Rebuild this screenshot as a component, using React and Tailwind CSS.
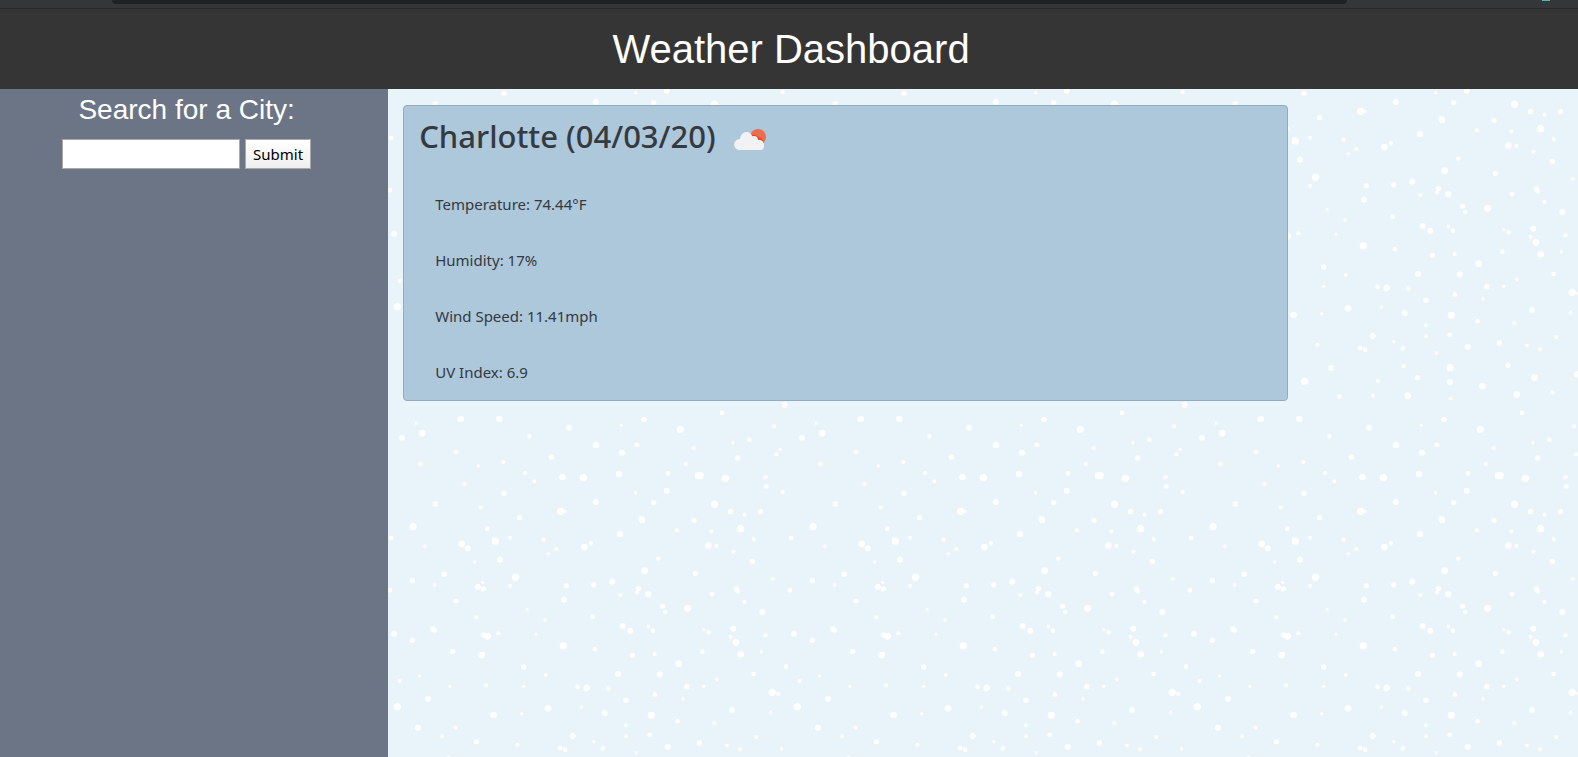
import React from "react";

// Snowflakes of one background tile: [cx, cy, r] in a 1200 x 1200 space.
const FLAKES = [
  [1190, 14, 9], [1002, 39, 7], [218, 57, 10], [334, 57, 10], [768, 58, 8], [85, 70, 5], [700, 76, 5], [543, 83, 9],
  [877, 88, 11], [1158, 79, 6], [103, 100, 10], [42, 113, 9], [424, 109, 7], [1084, 119, 7], [1035, 128, 5],
  [624, 135, 10], [747, 135, 7], [917, 144, 6], [1177, 148, 5], [204, 156, 6], [702, 158, 9], [1165, 163, 6],
  [490, 171, 8], [1049, 174, 8], [346, 186, 6], [98, 192, 7], [271, 198, 5], [893, 192, 6], [411, 219, 6],
  [693, 222, 10], [840, 220, 7], [930, 227, 10], [937, 227, 10], [523, 231, 10], [586, 233, 11], [1012, 235, 11],
  [1132, 232, 6], [439, 244, 6], [228, 252, 6], [1135, 259, 7], [836, 272, 9], [1184, 276, 6], [348, 280, 8],
  [743, 279, 5], [623, 306, 9], [797, 308, 8], [142, 312, 8], [980, 313, 11], [278, 322, 6], [518, 334, 11],
  [531, 334, 5], [1028, 335, 8], [1117, 335, 8], [1069, 344, 6], [395, 353, 8], [762, 359, 10], [918, 361, 8],
  [75, 380, 11], [298, 386, 7], [1058, 386, 11], [867, 391, 6], [971, 394, 6], [696, 402, 10], [9, 414, 7],
  [366, 413, 6], [1097, 418, 6], [467, 419, 6], [322, 423, 11], [221, 432, 10], [239, 445, 9], [609, 430, 6],
  [589, 441, 10], [111, 439, 5], [505, 447, 6], [961, 437, 10], [985, 438, 6], [1036, 455, 6], [481, 461, 5],
  [811, 476, 6], [336, 479, 9], [260, 486, 5], [1093, 484, 8], [770, 512, 10], [169, 523, 8], [922, 520, 8],
  [383, 532, 11], [1155, 536, 6], [73, 542, 8], [673, 545, 9], [284, 547, 5], [140, 555, 5], [366, 557, 6],
  [535, 557, 8], [617, 554, 8], [270, 561, 9], [286, 567, 8], [751, 565, 8], [747, 577, 6], [781, 583, 9],
  [697, 585, 6], [1045, 567, 8], [1049, 574, 7], [6, 571, 7], [1206, 571, 7], [972, 583, 7], [204, 603, 7],
  [528, 599, 9], [1069, 606, 6], [824, 619, 8], [832, 636, 7], [899, 625, 10], [417, 629, 5], [1123, 636, 9],
  [614, 650, 7], [265, 652, 6], [471, 660, 5], [704, 678, 9], [727, 692, 9], [782, 680, 6], [795, 692, 7],
  [1036, 686, 9], [947, 689, 5], [962, 697, 7], [134, 687, 8], [140, 691, 7], [18, 701, 9], [288, 705, 8],
  [299, 709, 10], [331, 700, 6], [444, 704, 5], [1028, 711, 6], [1132, 706, 6], [73, 721, 8], [1044, 727, 10],
  [526, 737, 11], [621, 747, 7], [194, 754, 8], [943, 755, 7], [1120, 755, 5], [281, 765, 10], [733, 766, 8],
  [800, 762, 6], [1058, 763, 10], [872, 791, 10], [407, 801, 8], [1194, 800, 7], [690, 822, 9], [815, 823, 9],
  [473, 825, 6], [1097, 822, 7], [94, 828, 5], [987, 838, 5], [35, 843, 6], [294, 856, 6], [185, 859, 5],
  [407, 859, 5], [569, 860, 7], [596, 864, 10], [661, 865, 7], [897, 860, 8], [948, 859, 5], [801, 884, 7],
  [1153, 877, 11], [1171, 881, 6], [120, 896, 9], [714, 901, 8], [885, 897, 5], [28, 920, 11], [480, 925, 10],
  [580, 921, 5], [650, 939, 9], [1032, 930, 9], [401, 941, 5], [1148, 938, 5], [317, 945, 10], [790, 946, 11],
  [868, 963, 7], [979, 970, 6], [714, 976, 6], [90, 983, 9], [203, 983, 6], [162, 1009, 6], [554, 1008, 9],
  [714, 1009, 6], [785, 1005, 7], [1105, 1011, 6], [266, 1025, 8], [617, 1025, 5], [388, 1034, 6],
  [934, 1029, 8], [1017, 1036, 5], [839, 1040, 9], [517, 1044, 7], [531, 1049, 7], [645, 1045, 7],
  [1056, 1048, 6], [1180, 1047, 5], [745, 1059, 5], [182, 1073, 6], [429, 1104, 8], [647, 1099, 6],
  [786, 1103, 11], [960, 1096, 8], [350, 1144, 11], [570, 1143, 6], [688, 1133, 8], [786, 1147, 9],
  [883, 1158, 10], [1040, 1133, 10], [1168, 1123, 10], [454, 1190, 7], [555, 1187, 6], [659, 1187, 10],
  [788, 1197, 6], [986, 1184, 10], [1093, 1177, 6],
];

const READINGS = [
  "Temperature: 74.44°F",
  "Humidity: 17%",
  "Wind Speed: 11.41mph",
  "UV Index: 6.9",
];

function Snow() {
  return (
    <svg aria-hidden="true" className="absolute inset-0 h-full w-full">
      <defs>
        <pattern id="snow" x="0" y="-89" width="400" height="400" patternUnits="userSpaceOnUse" viewBox="0 0 1200 1200">
          {FLAKES.map(([cx, cy, r], i) => (
            <circle key={i} cx={cx} cy={cy} r={r} fill="#fff" />
          ))}
        </pattern>
      </defs>
      <rect width="100%" height="100%" fill="url(#snow)" />
    </svg>
  );
}

function CloudIcon() {
  return (
    <svg role="img" aria-label="Few clouds" viewBox="0 0 96 63" className="mt-[7px] h-[21px] w-8">
      <circle cx="72" cy="24" r="24" fill="#ec6e4c" />
      <path d="M50 20c7-4 13-4 18 0 3 2 5 3 6 5 6 0 10 3 12 9l-2 8H50z" fill="#e84a26" />
      <path
        d="M16 63a16.500 16.500 0 0 1 2-33C20 17 28 9 38 9c8 0 13 4 17 13 9-3 16 1 17 10 9 0 15 3 16 10 5 8 2 21-9 21z"
        fill="#f2f2f2"
      />
    </svg>
  );
}

export default function App() {
  return (
    <div className="flex min-h-screen flex-col bg-[#e8f3fa] font-['Noto_Sans',sans-serif] text-[#343a40]">
      <div className="flex h-[9px] items-start border-b border-[#292929] bg-[#35363a]">
        <div className="ml-28 h-1 flex-1 rounded-b-lg bg-[#202124]" />
        <div className="flex w-[231px] justify-end pr-7">
          <div className="h-px w-2 bg-[#3fc1b0]" />
        </div>
      </div>
      <header className="bg-[#353535] py-4 pl-1">
        <h1 className="text-center font-['Liberation_Sans',sans-serif] text-[40px] leading-[48px] text-white">
          Weather Dashboard
        </h1>
      </header>
      <div className="flex flex-1">
        <aside className="w-[24.6%] bg-[#6c7585] pr-[15px] text-center">
          <form onSubmit={(e) => e.preventDefault()}>
            <h2 className="pt-1 font-['Liberation_Sans',sans-serif] text-[28px] leading-[34px] text-white">
              <label htmlFor="city">Search for a City:</label>
            </h2>
            <div className="mt-3 flex justify-center gap-[5px]">
              <input
                id="city"
                type="text"
                className="h-[30px] w-[178px] border border-[#a9a9a9] bg-white px-1 text-black outline-none"
              />
              <button
                type="submit"
                className="h-[30px] w-[66px] border border-[#a9a9a9] bg-linear-to-b from-white to-[#efefef] text-[15px] leading-6 text-black"
              >
                Submit
              </button>
            </div>
          </form>
        </aside>
        <main className="relative flex-1 pt-4 pl-[15px]">
          <Snow />
          <section className="relative w-[75.3%] rounded border border-[#94abbd] bg-[#adc7db] px-[15px] pt-[11px] pb-4">
            <div className="flex items-center gap-[18px]">
              <h2 className="text-[31px] leading-[38px] font-medium">Charlotte (04/03/20)</h2>
              <CloudIcon />
            </div>
            <ul className="mt-[37px] flex flex-col gap-8 pl-4 text-[15px] leading-6">
              {READINGS.map((reading) => (
                <li key={reading}>{reading}</li>
              ))}
            </ul>
          </section>
        </main>
      </div>
    </div>
  );
}
